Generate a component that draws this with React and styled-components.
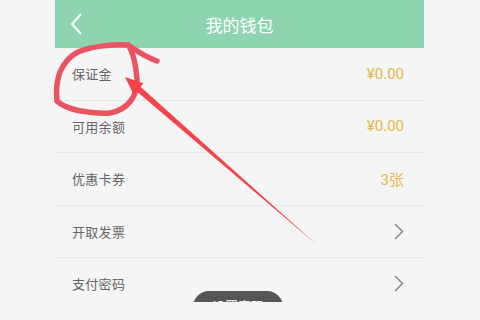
import React from "react";
import styled, { createGlobalStyle } from "styled-components";

const GlobalStyle = createGlobalStyle`
  html, body {
    margin: 0;
    padding: 0;
    background: #f4f4f4;
  }
  * {
    box-sizing: border-box;
  }
`;

const Page = styled.div`
  position: relative;
  width: 480px;
  height: 320px;
  padding-left: 55px;
  background: #f4f4f4;
  font-family: "Noto Sans CJK SC", "Noto Sans", sans-serif;
  overflow: hidden;
`;

const Phone = styled.div`
  position: relative;
  width: 369px;
  height: 302px;
  overflow: hidden;
  background: #f5f5f5;
`;

const Header = styled.div`
  position: relative;
  height: 48px;
  background: #8fd4b1;
  display: flex;
  align-items: center;
  justify-content: center;
  color: #fff;
  font-size: 17px;
`;

const BackButton = styled.div`
  position: absolute;
  left: 15px;
  top: 13px;
  width: 14px;
  height: 22px;
  display: flex;
`;

const List = styled.div`
  display: flex;
  flex-direction: column;
`;

const Row = styled.div`
  height: 52.5px;
  flex-shrink: 0;
  display: flex;
  align-items: center;
  justify-content: space-between;
  padding: 0 20px 0 17px;
  border-bottom: 1px solid #e9e9e9;
`;

const Label = styled.span`
  font-size: 13px;
  color: #666;
  letter-spacing: 0.3px;
`;

const Value = styled.span`
  font-family: Roboto, "Noto Sans CJK SC", sans-serif;
  font-size: 15px;
  color: #e6b84c;
`;

const Toast = styled.div`
  position: absolute;
  left: 138px;
  top: 291px;
  width: 90px;
  height: 34px;
  border-radius: 16px;
  background: #555;
  color: #fff;
  font-size: 13px;
  text-align: center;
  padding-top: 5px;
`;

const Overlay = styled.svg`
  position: absolute;
  left: 0;
  top: 0;
  pointer-events: none;
`;

const Chevron = () => (
  <svg width="10" height="17" viewBox="0 0 10 17">
    <path d="M1 1 L8.5 8.5 L1 16" fill="none" stroke="#8a8a8a" strokeWidth="1.5" />
  </svg>
);

const rows = [
  { label: "保证金", value: "¥0.00" },
  { label: "可用余额", value: "¥0.00" },
  { label: "优惠卡券", value: "3张" },
  { label: "开取发票", arrow: true },
  { label: "支付密码", arrow: true },
];

const App = () => {
  return (
    <>
      <GlobalStyle />
      <Page>
        <Phone>
          <Header>
            <BackButton>
              <svg width="14" height="22" viewBox="0 0 14 22">
                <path d="M11 1 L2 11 L11 21" fill="none" stroke="#fff" strokeWidth="2" />
              </svg>
            </BackButton>
            我的钱包
          </Header>
          <List>
            {rows.map((row) => (
              <Row key={row.label}>
                <Label>{row.label}</Label>
                {row.arrow ? <Chevron /> : <Value>{row.value}</Value>}
              </Row>
            ))}
          </List>
          <Toast>设置密码</Toast>
        </Phone>
        <Overlay width="480" height="320" viewBox="0 0 480 320">
          <path
            d="M57 101 C66 110 90 114 110 113 C128 110 138 95 137 80 C136 66 133 52 128 45 C115 44 92 46 78 52 C70 56 64 63 60 72 C57 80 56 92 57 101 M128 45 C138 52 148 58 157 61"
            fill="none"
            stroke="#ea5361"
            strokeWidth="5.5"
            strokeLinecap="round"
            strokeLinejoin="round"
          />
          <polygon
            points="125,77 143.5,83.3 140.5,86.8 317,245 136.3,91 133.5,94.5"
            fill="#f4444a"
          />
        </Overlay>
      </Page>
    </>
  );
};

export default App;
